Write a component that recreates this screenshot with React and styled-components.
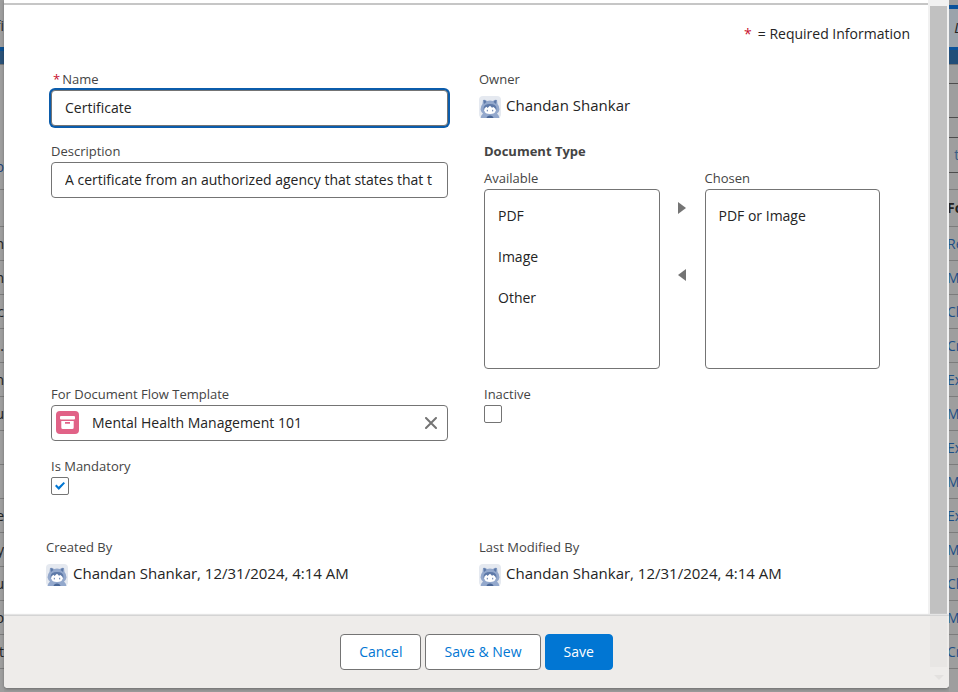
import React, { useState } from "react";
import styled, { createGlobalStyle, css } from "styled-components";

const GlobalStyle = createGlobalStyle`
  *, *::before, *::after { box-sizing: border-box; }
  body {
    margin: 0;
    background: #9a9a9a;
    color: #242424;
    font: 14px/20px "Open Sans", "Noto Sans", sans-serif;
  }
  button, input { font: inherit; color: inherit; }
`;

const Page = styled.div`
  display: grid;
  grid-template-columns: 4px minmax(0, 1fr) 9px;
  min-height: 100vh;
`;

const Strip = styled.div`
  min-width: 0;
  overflow: hidden;
  background: #9e9e9e;
`;

const StripCell = styled.div`
  display: flex;
  align-items: center;
  justify-content: ${(p) => (p.$end ? "flex-end" : "flex-start")};
  height: ${(p) => p.$h || 34}px;
  overflow: hidden;
  white-space: nowrap;
  text-indent: ${(p) => (p.$end ? 0 : -2)}px;
  font-weight: ${(p) => (p.$bold ? 700 : 400)};
  font-style: ${(p) => (p.$italic ? "italic" : "normal")};
  color: ${(p) => p.$color || "#222"};
  background: ${(p) => p.$bg || "transparent"};
  border-bottom: ${(p) => (p.$line ? `1px solid ${p.$line}` : "0")};
`;

const Dialog = styled.section`
  display: flex;
  flex-direction: column;
  margin-bottom: 4px;
  overflow: hidden;
  border-radius: 0 0 4px 4px;
  background: #fff;
  box-shadow: 0 1px 3px rgba(0, 0, 0, 0.3);
`;

const DialogBody = styled.div`
  display: grid;
  grid-template-columns: minmax(0, 1fr) 21px;
  flex: 1;
`;

const Form = styled.form`
  margin-top: 3px;
  padding: 19px 16px 28px 42px;
  border-top: 2px solid #c6c6c6;
`;

const Track = styled.div`
  padding: 6px 2px 0;
  background: #f1f1f1;
`;

const Thumb = styled.div`
  height: 100%;
  background: #c1c1c1;
`;

const RequiredNote = styled.p`
  margin: 0 2px 26px 0;
  text-align: right;
`;

const Star = styled.span`
  color: #c8102e;
  margin-right: ${(p) => p.$gap || 0}px;
`;

const Fields = styled.div`
  display: grid;
  grid-template-columns: repeat(2, minmax(0, 1fr));
  row-gap: 16px;
`;

const AuditFields = styled(Fields)`
  margin-top: 43px;
`;

const Field = styled.div`
  display: flex;
  flex-direction: column;
  align-items: flex-start;
  gap: 2px;
  min-width: 0;
  padding: ${(p) => (p.$plain ? "0" : "0 31px 0 5px")};
`;

const labelText = css`
  font-size: 13px;
  line-height: 18px;
  color: #444;
`;

const Label = styled.label`
  ${labelText}
  padding-left: ${(p) => (p.$required ? 2 : 0)}px;
`;

const Caption = styled.span`
  ${labelText}
`;

const TextInput = styled.input`
  width: 100%;
  height: 36px;
  padding: 0 13px 2px;
  border: 1px solid #747474;
  border-radius: 4px;
  background: #fff;
  outline: 0;
  ${(p) => p.$active && "box-shadow: 0 0 0 2px #0b5cab;"}
`;

const Person = styled.div`
  display: flex;
  align-items: center;
  gap: 5px;
  height: 22px;
  margin-top: 6px;
  font-size: 15px;
  white-space: nowrap;
`;

const PersonText = styled.span`
  padding-bottom: 4px;
`;

const Avatar = styled.svg`
  flex: none;
  width: 22px;
  height: 22px;
`;

const DualList = styled.fieldset`
  display: grid;
  grid-template-columns: minmax(0, 1fr) 45px minmax(0, 1fr);
  width: 100%;
  margin: 0;
  padding: 0 1px 0 0;
  border: 0;
`;

const DualTitle = styled.legend`
  ${labelText}
  padding: 0;
  margin-bottom: 9px;
  font-weight: 700;
`;

const ListColumn = styled.div`
  display: flex;
  flex-direction: column;
  gap: 2px;
`;

const ListBox = styled.ul`
  height: 180px;
  margin: 0;
  padding: 5px 0;
  list-style: none;
  border: 1px solid #747474;
  border-radius: 4px;
`;

const Option = styled.li`
  padding: 0 13px;
  line-height: 41px;
`;

const Movers = styled.div`
  display: flex;
  flex-direction: column;
  align-items: center;
  gap: 47px;
  padding-top: 29px;
`;

const IconButton = styled.button`
  display: grid;
  place-items: center;
  flex: none;
  width: 20px;
  height: 20px;
  padding: 0;
  border: 0;
  background: none;
  color: #747474;
`;

const Lookup = styled.div`
  display: flex;
  align-items: center;
  width: 100%;
  height: 36px;
  padding: 0 6px 0 4px;
  border: 1px solid #747474;
  border-radius: 4px;
`;

const LookupInput = styled.input`
  flex: 1;
  min-width: 0;
  padding: 0 0 0 12px;
  border: 0;
  outline: 0;
  background: none;
`;

const Checkbox = styled.input`
  appearance: none;
  display: grid;
  place-items: center;
  width: 18px;
  height: 18px;
  margin: 0;
  border: 1px solid #747474;
  border-radius: 2px;
  background: #fff;
  &:checked::after {
    content: "";
    width: 10px;
    height: 8px;
    background: #0176d3;
    clip-path: polygon(0 50%, 15% 32%, 37% 58%, 86% 0, 100% 16%, 38% 100%);
  }
`;

const Footer = styled.footer`
  display: grid;
  grid-template-columns: 21px 1fr 21px;
  height: 73px;
  background: #eeecea;
  border-top: 1px solid #d4d4d4;
  box-shadow: 0 -1px 1px #e4e4e4;
  z-index: 1;
`;

const Actions = styled.div`
  display: flex;
  justify-content: center;
  align-items: center;
  gap: 4px;
`;

const Button = styled.button`
  height: 36px;
  padding: 0 18px;
  border: 1px solid ${(p) => (p.$primary ? "#0176d3" : "#747474")};
  border-radius: 4px;
  background: ${(p) => (p.$primary ? "#0176d3" : "#fff")};
  color: ${(p) => (p.$primary ? "#fff" : "#0176d3")};
`;

const TrackEnd = styled.div`
  display: flex;
  flex-direction: column;
  align-items: center;
  gap: 8px;
  padding: 0 2px;
`;

const ThumbEnd = styled.div`
  width: 100%;
  height: 51px;
  background: #e8e6e4;
`;

const leftRows = ["h", "h", "c", ".", "n", "u", "", "", "e", "y", "u", "p", "t"];
const rightRows = ["Re", "M", "Cl", "Cr", "Ex", "M", "Ex", "M", "Ex", "M", "Cl", "M", "Cr"];

function Mascot() {
  return (
    <Avatar viewBox="0 0 22 22" aria-hidden="true">
      <rect width="22" height="22" rx="4" fill="#e5e9f0" />
      <path d="M4 4Q6 3 8 5Q11 4 14 5Q16 3 18 4L18.5 8Q20.5 10 20.5 13.5Q20 16.5 18 17.5Q20 19 20.5 22H1.5Q2 19 4 17.5Q2 16 1.5 13.5Q1.5 10 3.5 8Z" fill="#93a8cc" />
      <path d="M4.5 4Q6.5 4 7.5 6L5 8ZM17.5 4Q15.5 4 14.5 6L17 8Z" fill="#5d79a8" />
      <path d="M4.5 13Q4.5 8 11 8Q17.5 8 17.5 13L16.5 16H5.5Z" fill="#5d79a8" />
      <path d="M5 14.5Q5 12 7.5 10.7L8.5 12L11 9.8L13 11.8L14.5 11Q17 12.5 17 14.5Q16 18 11 18Q6 18 5 14.5Z" fill="#fff" />
      <path d="M8.3 13.8v1.6M13.7 13.8v1.6" stroke="#5d79a8" strokeWidth="1" />
      <path d="M7.5 22Q8 19.5 11 19.5Q14 19.5 14.5 22Z" fill="#4a6797" />
    </Avatar>
  );
}

function UserField({ caption, children }) {
  return (
    <Field $plain>
      <Caption>{caption}</Caption>
      <Person>
        <Mascot />
        <PersonText>{children}</PersonText>
      </Person>
    </Field>
  );
}

function List({ id, title, items }) {
  return (
    <ListColumn>
      <Caption id={id}>{title}</Caption>
      <ListBox role="listbox" aria-labelledby={id}>
        {items.map((item) => (
          <Option key={item} role="option" aria-selected="false">{item}</Option>
        ))}
      </ListBox>
    </ListColumn>
  );
}

export default function App() {
  const [name, setName] = useState("Certificate");
  const [description, setDescription] = useState("A certificate from an authorized agency that states that t");
  const [template, setTemplate] = useState("Mental Health Management 101");

  return (
    <Page>
      <GlobalStyle />
      <Strip aria-hidden="true">
        <StripCell $h={5} />
        <StripCell $h={42} $end>fi</StripCell>
        <StripCell $h={4} $bg="#0b4f8f" />
        <StripCell $h={14} $bg="#2b5278" $line="#777" />
        <StripCell $h={80} />
        <StripCell $h={45} $line="#7c7c7c" $color="#1d4478" $end>'p</StripCell>
        <StripCell $h={37} $line="#7c7c7c" />
        {leftRows.map((text, i) => (
          <StripCell key={i} $line="#7c7c7c" $end>{text}</StripCell>
        ))}
      </Strip>

      <Dialog role="dialog" aria-label="Edit document">
        <DialogBody>
          <Form id="record" onSubmit={(e) => e.preventDefault()}>
            <RequiredNote><Star $gap={6}>*</Star>= Required Information</RequiredNote>
            <Fields>
              <Field>
                <Label htmlFor="name" $required><Star $gap={2}>*</Star>Name</Label>
                <TextInput id="name" $active value={name} onChange={(e) => setName(e.target.value)} />
              </Field>
              <UserField caption="Owner">Chandan Shankar</UserField>

              <Field>
                <Label htmlFor="description">Description</Label>
                <TextInput id="description" value={description} onChange={(e) => setDescription(e.target.value)} />
              </Field>
              <Field>
                <DualList>
                  <DualTitle>Document Type</DualTitle>
                  <List id="available" title="Available" items={["PDF", "Image", "Other"]} />
                  <Movers>
                    <IconButton type="button" aria-label="Move to Chosen">
                      <svg width="8" height="12" viewBox="0 0 8 12"><path d="M0 0L8 6L0 12Z" fill="currentColor" /></svg>
                    </IconButton>
                    <IconButton type="button" aria-label="Move to Available">
                      <svg width="8" height="12" viewBox="0 0 8 12"><path d="M8 0L0 6L8 12Z" fill="currentColor" /></svg>
                    </IconButton>
                  </Movers>
                  <List id="chosen" title="Chosen" items={["PDF or Image"]} />
                </DualList>
              </Field>

              <Field>
                <Label htmlFor="template">For Document Flow Template</Label>
                <Lookup>
                  <svg width="24" height="24" viewBox="0 0 24 24" aria-hidden="true">
                    <rect width="23" height="23" rx="4" fill="#e16287" />
                    <rect x="4" y="5" width="15" height="3.5" rx="1" fill="#fff" />
                    <path d="M5.3 10H17.7V16.5Q17.7 18 16.2 18H6.8Q5.3 18 5.3 16.5ZM9 11V12.8H14V11Z" fill="#fff" fillRule="evenodd" />
                  </svg>
                  <LookupInput id="template" value={template} onChange={(e) => setTemplate(e.target.value)} />
                  <IconButton type="button" aria-label="Clear selection" onClick={() => setTemplate("")}>
                    <svg width="12" height="12" viewBox="0 0 12 12"><path d="M1 1L11 11M11 1L1 11" stroke="currentColor" strokeWidth="2" strokeLinecap="round" /></svg>
                  </IconButton>
                </Lookup>
              </Field>
              <Field>
                <Label htmlFor="inactive">Inactive</Label>
                <Checkbox type="checkbox" id="inactive" />
              </Field>

              <Field>
                <Label htmlFor="mandatory">Is Mandatory</Label>
                <Checkbox type="checkbox" id="mandatory" defaultChecked />
              </Field>
            </Fields>
            <AuditFields>
              <UserField caption="Created By">Chandan Shankar, 12/31/2024, 4:14 AM</UserField>
              <UserField caption="Last Modified By">Chandan Shankar, 12/31/2024, 4:14 AM</UserField>
            </AuditFields>
          </Form>
          <Track><Thumb /></Track>
        </DialogBody>
        <Footer>
          <span />
          <Actions>
            <Button type="button">Cancel</Button>
            <Button type="button">Save &amp; New</Button>
            <Button type="submit" form="record" $primary>Save</Button>
          </Actions>
          <TrackEnd>
            <ThumbEnd />
            <svg width="10" height="5" viewBox="0 0 10 5" aria-hidden="true"><path d="M0 0H10L5 5Z" fill="#e3e1df" /></svg>
          </TrackEnd>
        </Footer>
      </Dialog>

      <Strip aria-hidden="true">
        <StripCell $h={5} />
        <StripCell $h={4} $bg="#0b529b" />
        <StripCell $h={38} $bg="#9ba3ab" $italic>&nbsp;&nbsp;L</StripCell>
        <StripCell $h={3} $bg="#0b529b" />
        <StripCell $h={15} $bg="#234e78" $line="#777" />
        <StripCell $h={19} $line="#4d4d4d" />
        <StripCell $h={34} $line="#4d4d4d" />
        <StripCell $h={20} $line="#4d4d4d" />
        <StripCell $h={35} $line="#4d4d4d" $color="#3d5e86">&nbsp;&nbsp;t</StripCell>
        <StripCell $h={17} $line="#7c7c7c" />
        <StripCell $h={37} $line="#7c7c7c" $bold>Fo</StripCell>
        {rightRows.map((text, i) => (
          <StripCell key={i} $line="#7c7c7c" $color="#1d4f86">{text}</StripCell>
        ))}
      </Strip>
    </Page>
  );
}
